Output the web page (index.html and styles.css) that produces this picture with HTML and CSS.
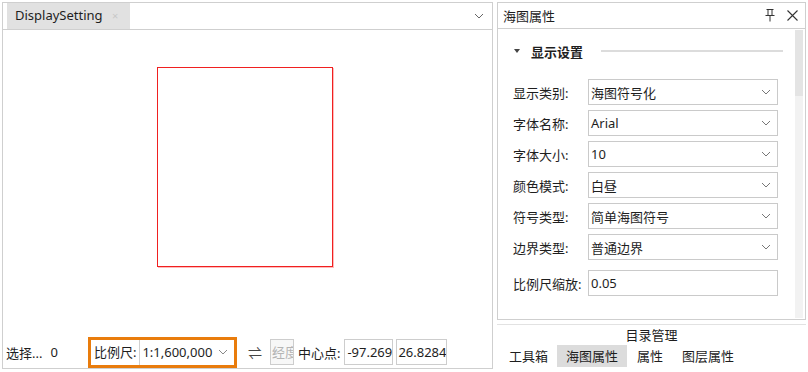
FILE: index.html
```html
<!DOCTYPE html>
<html>
<head>
<meta charset="utf-8">
<title>DisplaySetting</title>
<link rel="stylesheet" href="styles.css">
</head>
<body>
<div class="doc">
    <div class="doc-head">
        <div class="doc-tab">DisplaySetting <span class="tab-x">×</span></div>
        <svg class="chev head-chev" width="10" height="6" viewBox="0 0 10 6"><path d="M1 1 L5 5 L9 1" fill="none" stroke="#666" stroke-width="1"/></svg>
    </div>
    <div class="doc-body">
        <div class="canvas">
            <div class="frame"></div>
        </div>
        <div class="status">
            <span class="sel">选择...</span>
            <span class="sel-num">0</span>
            <div class="scale-box">
                <span class="scale-label">比例尺:</span>
                <span class="scale-val">1:1,600,000</span>
                <svg class="chev" width="10" height="6" viewBox="0 0 10 6"><path d="M1 1 L5 5 L9 1" fill="none" stroke="#888" stroke-width="1"/></svg>
            </div>
            <span class="swap">⇌</span>
            <div class="field disabled">经度</div>
            <span class="center-label">中心点:</span>
            <div class="field lon">-97.2691</div>
            <div class="field lat">26.82845</div>
        </div>
    </div>
</div>

<div class="props">
    <div class="props-head">
        <span class="props-title">海图属性</span>
        <svg class="pin" width="10" height="13" viewBox="0 0 10 13"><path d="M1.5 0.5 H8.5 M3 0.5 V6.5 M7 0.5 V6.5 M0.5 6.5 H9.5 M5 6.5 V12.5" fill="none" stroke="#333" stroke-width="1"/></svg>
        <svg class="close" width="11" height="11" viewBox="0 0 11 11"><path d="M0.5 0.5 L10.5 10.5 M10.5 0.5 L0.5 10.5" fill="none" stroke="#333" stroke-width="1.1"/></svg>
    </div>
    <div class="props-body">
        <div class="form">
            <div class="section">
                <span class="caret"></span>
                <span class="section-title">显示设置</span>
                <span class="section-line"></span>
            </div>
            <div class="row"><label>显示类别:</label><div class="combo">海图符号化<svg class="chev" width="10" height="6" viewBox="0 0 10 6"><path d="M1 1 L5 5 L9 1" fill="none" stroke="#777" stroke-width="1"/></svg></div></div>
            <div class="row"><label>字体名称:</label><div class="combo">Arial<svg class="chev" width="10" height="6" viewBox="0 0 10 6"><path d="M1 1 L5 5 L9 1" fill="none" stroke="#777" stroke-width="1"/></svg></div></div>
            <div class="row"><label>字体大小:</label><div class="combo">10<svg class="chev" width="10" height="6" viewBox="0 0 10 6"><path d="M1 1 L5 5 L9 1" fill="none" stroke="#777" stroke-width="1"/></svg></div></div>
            <div class="row"><label>颜色模式:</label><div class="combo">白昼<svg class="chev" width="10" height="6" viewBox="0 0 10 6"><path d="M1 1 L5 5 L9 1" fill="none" stroke="#777" stroke-width="1"/></svg></div></div>
            <div class="row"><label>符号类型:</label><div class="combo">简单海图符号<svg class="chev" width="10" height="6" viewBox="0 0 10 6"><path d="M1 1 L5 5 L9 1" fill="none" stroke="#777" stroke-width="1"/></svg></div></div>
            <div class="row"><label>边界类型:</label><div class="combo">普通边界<svg class="chev" width="10" height="6" viewBox="0 0 10 6"><path d="M1 1 L5 5 L9 1" fill="none" stroke="#777" stroke-width="1"/></svg></div></div>
            <div class="row last"><label>比例尺缩放:</label><div class="combo">0.05</div></div>
        </div>
        <div class="scrollbar"><div class="thumb"></div></div>
    </div>
    <div class="props-foot">
        <div class="foot-title">目录管理</div>
        <div class="foot-tabs">
            <span class="ftab">工具箱</span>
            <span class="ftab active">海图属性</span>
            <span class="ftab">属性</span>
            <span class="ftab">图层属性</span>
        </div>
    </div>
</div>
</body>
</html>
```

FILE: styles.css
```css
body {
    margin: 0;
    width: 808px;
    height: 372px;
    padding: 2px 2px 0 2px;
    box-sizing: border-box;
    display: flex;
    background: #fff;
    font-family: "Noto Sans", "Noto Sans CJK SC", sans-serif;
    font-size: 13px;
    color: #1e1e1e;
    overflow: hidden;
}

/* left document window */
.doc {
    width: 491px;
    height: 367px;
    display: flex;
    flex-direction: column;
}

.doc-head {
    height: 27px;
    box-sizing: border-box;
    border: 1px solid #cfcfcf;
    border-bottom: none;
    display: flex;
    align-items: flex-end;
}

.doc-tab {
    margin-left: 4px;
    width: 123px;
    height: 26px;
    box-sizing: border-box;
    padding-left: 8px;
    line-height: 25px;
    background: #e1e1e1;
    white-space: nowrap;
}

.tab-x {
    color: #c8c8c8;
    font-size: 11px;
    margin-left: 6px;
}

.head-chev {
    margin-left: auto;
    margin-right: 8px;
    align-self: center;
}

.doc-body {
    flex: 1;
    border: 1px solid #cfcfcf;
    display: flex;
    flex-direction: column;
}

.canvas {
    flex: 1;
}

.frame {
    margin: 37px 0 0 154px;
    width: 174px;
    height: 198px;
    border: 1px solid #f02020;
    box-shadow: 1px 1px 0 rgba(255, 60, 60, 0.35);
}

.status {
    height: 32px;
    display: flex;
    align-items: center;
    padding-left: 3px;
    white-space: nowrap;
}

.sel-num {
    margin-left: 8px;
}

.scale-box {
    margin-left: 30px;
    width: 149px;
    height: 31px;
    box-sizing: border-box;
    border: 3px solid #e97c0c;
    display: flex;
    align-items: center;
    padding-left: 3px;
}

.scale-label {
    padding-right: 3px;
    border-right: 1px solid #d0d0d0;
    line-height: 25px;
}

.scale-val {
    margin-left: 2px;
}

.scale-box .chev {
    margin-left: 6px;
}

.swap {
    margin-left: 11px;
    font-size: 14px;
    color: #444;
}

.field {
    height: 26px;
    box-sizing: border-box;
    border: 1px solid #cdcdcd;
    line-height: 24px;
    overflow: hidden;
    padding-left: 2px;
}

.field.disabled {
    width: 24px;
    margin-left: 8px;
    color: #b4b4b4;
    background: #f7f7f7;
    padding-left: 1px;
}

.center-label {
    margin-left: 4px;
}

.field.lon {
    width: 49px;
    margin-left: 4px;
}

.field.lat {
    width: 51px;
    margin-left: 3px;
    padding-left: 1px;
}

/* right properties window */
.props {
    margin-left: 4px;
    width: 309px;
    display: flex;
    flex-direction: column;
}

.props-head {
    height: 26px;
    box-sizing: border-box;
    border: 1px solid #cfcfcf;
    border-bottom: none;
    display: flex;
    align-items: center;
    padding-left: 5px;
}

.pin {
    margin-left: auto;
}

.close {
    margin-left: 12px;
    margin-right: 7px;
}

.props-body {
    height: 292px;
    box-sizing: border-box;
    border: 1px solid #cfcfcf;
    display: flex;
}

.form {
    flex: 1;
    padding: 11px 0 0 15px;
}

.section {
    height: 22px;
    display: flex;
    align-items: center;
    margin-bottom: 17px;
}

.caret {
    width: 0;
    height: 0;
    border-left: 3px solid transparent;
    border-right: 3px solid transparent;
    border-top: 4px solid #444;
    margin-left: 1px;
}

.section-title {
    margin-left: 11px;
    font-weight: bold;
}

.section-line {
    flex: 1;
    height: 2px;
    background: #dcdcdc;
    margin: 0 12px 0 18px;
}

.row {
    height: 26px;
    display: flex;
    align-items: center;
    margin-bottom: 5px;
}

.row.last {
    margin-top: 10px;
}

.row label {
    width: 75px;
    white-space: nowrap;
}

.combo {
    width: 190px;
    height: 26px;
    box-sizing: border-box;
    border: 1px solid #cacaca;
    display: flex;
    align-items: center;
    padding-left: 2px;
}

.combo .chev {
    margin-left: auto;
    margin-right: 6px;
}

.scrollbar {
    width: 8px;
    margin: 1px 2px 1px 0;
    background: #f2f2f2;
}

.thumb {
    height: 66px;
    background: #e4e4e4;
}

.props-foot {
    flex: 1;
}

.foot-title {
    border-top: 1px solid #e2e2e2;
    margin-top: 4px;
    text-align: center;
    line-height: 20px;
}

.foot-tabs {
    display: flex;
    padding-left: 11px;
    height: 22px;
    align-items: center;
}

.ftab {
    padding: 0 9px;
    line-height: 22px;
    margin-right: 1px;
}

.ftab:first-child {
    padding-left: 1px;
    margin-right: 0;
}

.ftab.active {
    background: #dcdcdc;
}
```
